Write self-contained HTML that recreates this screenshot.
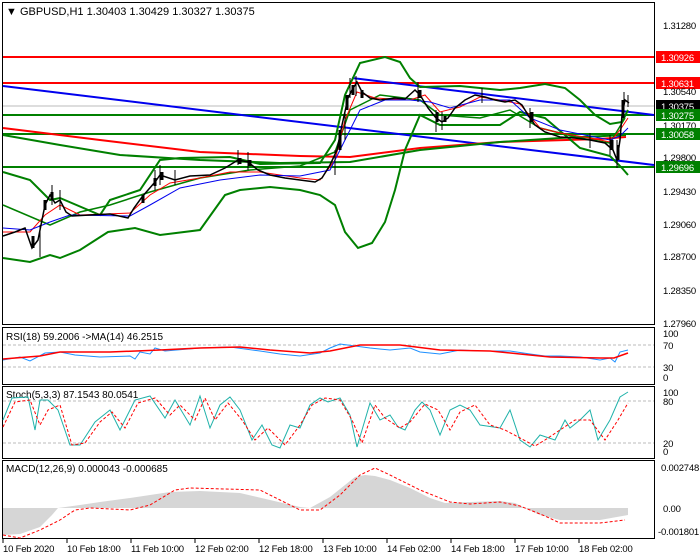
<!DOCTYPE html>
<html><head><meta charset="utf-8"><style>
html,body{margin:0;padding:0;background:#fff;width:700px;height:560px;overflow:hidden}
svg{display:block}
text{font-family:"Liberation Sans",sans-serif;font-size:10px;fill:#000}
.ax{font-size:9.5px;letter-spacing:-0.2px}
</style></head><body>
<svg width="700" height="560" viewBox="0 0 700 560">
<rect x="2.5" y="2.5" width="652" height="322" fill="none" stroke="#000"/>
<rect x="2.5" y="327.5" width="652" height="57" fill="none" stroke="#000"/>
<rect x="2.5" y="386.5" width="652" height="72" fill="none" stroke="#000"/>
<rect x="2.5" y="460.5" width="652" height="78" fill="none" stroke="#000"/>

<line x1="3" y1="106" x2="654" y2="106" stroke="#bbb"/>
<line x1="3" y1="57" x2="654" y2="57" stroke="#f00" stroke-width="2"/>
<line x1="3" y1="83" x2="654" y2="83" stroke="#f00" stroke-width="2"/>
<line x1="3" y1="115" x2="654" y2="115" stroke="#008000" stroke-width="2"/>
<line x1="3" y1="134" x2="654" y2="134" stroke="#008000" stroke-width="2"/>
<line x1="3" y1="167" x2="654" y2="167" stroke="#008000" stroke-width="2"/>
<line x1="3" y1="86" x2="654" y2="165" stroke="#0000ee" stroke-width="2"/>
<line x1="352" y1="78" x2="654" y2="115" stroke="#0000ee" stroke-width="2"/>
<polyline fill="none" stroke="#f00" stroke-width="2" points="3,128 100,140 200,152 300,156 350,157 420,148 500,142 600,139 626,137"/>
<polyline fill="none" stroke="#008000" stroke-width="2" points="3,135 60,145 120,155 200,160 280,163 350,162 420,150 500,142 560,138 626,135"/>
<polyline fill="none" stroke="#008000" stroke-width="2" points="3,258 30,262 50,255 60,258 80,250 108,232 135,228 160,235 200,230 225,195 240,190 270,187 300,190 320,195 335,205 345,232 358,248 372,243 385,222 395,190 405,150 420,115 440,125 500,125 520,112 545,118 580,148 610,156 622,168 628,175"/>
<polyline fill="none" stroke="#008000" stroke-width="2" points="3,172 30,180 50,200 60,198 100,215 110,200 140,190 160,160 180,158 230,157 260,164 320,163 335,140 345,95 360,63 385,57 400,62 410,78 420,87 460,86 480,88 500,90 520,88 545,84 565,88 580,100 595,115 610,124 622,122 628,110"/>
<polyline fill="none" stroke="#008000" stroke-width="1.5" points="3,205 50,225 80,212 110,205 150,192 200,178 250,170 300,166 335,152 350,110 380,95 420,100 440,115 480,118 510,110 540,128 580,138 610,143 625,118"/>
<polyline fill="none" stroke="#f00" stroke-width="1" points="3,232 30,232 45,215 60,205 80,215 130,213 150,195 170,183 200,178 230,172 260,172 300,178 320,180 335,160 345,120 357,92 375,98 410,100 425,95 440,112 460,107 480,97 500,100 520,104 540,128 560,133 590,138 610,142 620,130 628,118"/>
<polyline fill="none" stroke="#0000ee" stroke-width="1" points="3,228 30,230 50,222 70,215 130,216 150,205 180,188 220,180 260,175 300,176 330,170 345,140 360,110 385,100 410,100 430,102 450,108 480,100 510,100 530,118 560,130 590,136 610,140 620,136 628,128"/>
<polyline fill="none" stroke="#000" stroke-width="1.5" points="3,236 15,232 25,228 32,248 38,240 45,205 50,195 55,203 60,200 66,212 72,216 90,215 110,214 128,218 134,208 142,197 155,182 160,175 175,180 190,176 210,175 225,168 238,160 248,162 258,170 270,175 285,178 300,180 315,182 322,178 330,165 337,150 342,125 348,98 352,90 357,82 362,92 370,98 380,100 395,98 405,99 415,90 420,95 428,108 436,118 442,122 448,118 455,108 465,100 475,95 485,97 495,100 505,102 515,100 522,105 528,115 535,125 545,132 560,137 575,138 590,140 605,143 613,150 617,160 620,140 622,115 625,100 629,103"/>
<path stroke="#000" stroke-width="1" d="M40,225v32M52,185v20M60,190v20M155,170v20M160,165v20M175,170v15M238,150v15M248,152v18M335,150v25M345,110v30M350,78v20M356,76v20M418,82v20M436,110v22M442,112v18M482,88v15M530,108v20M590,133v15M610,135v20M617,140v28M624,92v20M628,95v12"/>
<path stroke="#000" stroke-width="3" d="M33,236v12M45,200v10M52,192v8M143,195v8M155,178v8M162,172v8M240,158v6M250,160v6M340,130v20M347,95v15M353,85v10M362,90v8M420,90v8M437,112v10M445,116v6M532,112v10M612,140v10M618,145v15M623,100v18"/>

<g class="ax">
<text class="ax" x="663" y="29">1.31280</text>
<rect x="656" y="51" width="44" height="12" fill="#f00"/><text class="ax" x="661" y="61" style="fill:#fff">1.30926</text>
<rect x="656" y="77" width="44" height="12" fill="#f00"/><text class="ax" x="661" y="87" style="fill:#fff">1.30631</text>
<text class="ax" x="663" y="95">1.30540</text>
<rect x="656" y="100" width="44" height="12" fill="#000"/><text class="ax" x="661" y="110" style="fill:#fff">1.30375</text>
<rect x="656" y="109" width="44" height="12" fill="#008000"/><text class="ax" x="661" y="119" style="fill:#fff">1.30275</text>
<text class="ax" x="663" y="129">1.30170</text>
<rect x="656" y="128" width="44" height="12" fill="#008000"/><text class="ax" x="661" y="138" style="fill:#fff">1.30058</text>
<text class="ax" x="663" y="161">1.29800</text>
<rect x="656" y="161" width="44" height="12" fill="#008000"/><text class="ax" x="661" y="171" style="fill:#fff">1.29696</text>
<text class="ax" x="663" y="195">1.29430</text>
<text class="ax" x="663" y="228">1.29060</text>
<text class="ax" x="663" y="260">1.28700</text>
<text class="ax" x="663" y="294">1.28350</text>
<text class="ax" x="663" y="327">1.27960</text>
</g>
<text x="6" y="15" style="font-size:11px">▼ GBPUSD,H1  1.30403 1.30429 1.30327 1.30375</text>

<line x1="3" y1="345" x2="654" y2="345" stroke="#bbb" stroke-dasharray="3,2"/>
<line x1="3" y1="367" x2="654" y2="367" stroke="#bbb" stroke-dasharray="3,2"/>
<text x="6" y="340">RSI(18) 59.2006  -&gt;MA(14) 46.2515</text>
<polyline fill="none" stroke="#1e90ff" points="3,360 20,357 30,361 45,353 60,352 75,355 100,357 130,356 135,359 140,352 150,354 155,348 165,351 200,348 230,347 260,351 280,354 300,356 320,353 330,348 340,344 355,346 370,348 390,350 410,348 420,352 440,354 460,350 480,351 510,351 530,354 545,356 560,356 580,357 600,360 610,358 615,362 620,352 628,350"/>
<polyline fill="none" stroke="#f00" stroke-width="1.5" points="3,359 40,356 60,352 110,352 160,350 200,348 240,347 270,350 310,353 330,351 360,345 400,345 440,350 490,351 520,354 550,357 600,358 614,358 628,353"/>
<text class="ax" x="663" y="337">100</text><text class="ax" x="663" y="349">70</text><text class="ax" x="663" y="371">30</text><text class="ax" x="663" y="381">0</text>

<line x1="3" y1="401" x2="654" y2="401" stroke="#bbb" stroke-dasharray="3,2"/>
<line x1="3" y1="443" x2="654" y2="443" stroke="#bbb" stroke-dasharray="3,2"/>
<text x="6" y="398">Stoch(5,3,3) 87.1543 80.0541</text>
<polyline fill="none" stroke="#20b2aa" points="3,420 12,398 28,397 35,430 40,400 48,400 58,410 70,445 80,445 95,422 110,410 120,430 135,400 150,396 165,418 175,400 190,425 200,396 210,428 220,405 230,397 240,410 252,440 262,425 272,445 280,448 290,425 300,428 310,405 320,398 328,402 340,398 350,415 357,447 370,403 380,420 390,415 398,427 405,430 415,410 422,402 430,410 440,435 450,410 460,405 470,410 480,425 500,428 510,410 520,440 530,447 540,435 555,440 565,420 570,428 580,420 590,410 598,440 610,420 620,397 628,392"/>
<polyline fill="none" stroke="#f00" stroke-dasharray="3,2" points="3,427 15,402 30,400 40,425 48,410 60,405 72,445 85,443 100,422 112,412 125,428 138,403 155,398 170,415 180,405 195,420 205,398 215,420 228,403 242,420 255,440 268,428 285,445 300,425 312,405 325,398 340,400 352,420 362,443 375,405 385,418 400,428 410,422 425,404 438,410 450,430 460,412 475,405 490,425 505,430 520,438 535,446 545,440 560,430 575,420 590,420 605,440 618,420 628,403"/>
<text class="ax" x="663" y="396">100</text><text class="ax" x="663" y="405">80</text><text class="ax" x="663" y="447">20</text><text class="ax" x="663" y="455">0</text>

<text x="6" y="472">MACD(12,26,9) 0.000043 -0.000685</text>
<polygon fill="#c8c8c8" opacity="0.75" points="3,508 3,535 20,534 40,527 52,515 58,508 80,505 100,502 130,498 150,495 170,492 200,491 240,493 270,500 300,507 310,508 330,497 345,485 355,477 365,475 375,476 390,480 410,488 430,498 445,503 470,502 500,501 515,503 525,508 540,515 560,520 600,520 628,515 628,508"/>
<polyline fill="none" stroke="#f00" stroke-dasharray="3,2" points="3,535 20,538 40,530 60,520 75,510 90,508 130,510 150,505 175,490 190,488 260,490 280,500 300,510 320,510 340,495 360,475 375,468 390,475 420,490 450,502 470,504 500,502 520,506 545,516 560,523 600,523 625,520"/>
<text class="ax" x="661" y="471">0.002748</text><text class="ax" x="663" y="512">0.00</text><text class="ax" x="658" y="535">-0.001801</text>

<g>
<text class="ax" x="3" y="552">10 Feb 2020</text><text class="ax" x="67" y="552">10 Feb 18:00</text><text class="ax" x="131" y="552">11 Feb 10:00</text><text class="ax" x="195" y="552">12 Feb 02:00</text><text class="ax" x="259" y="552">12 Feb 18:00</text><text class="ax" x="323" y="552">13 Feb 10:00</text><text class="ax" x="387" y="552">14 Feb 02:00</text><text class="ax" x="451" y="552">14 Feb 18:00</text><text class="ax" x="515" y="552">17 Feb 10:00</text><text class="ax" x="579" y="552">18 Feb 02:00</text>
</g>
<path stroke="#000" d="M3,539v4M67,539v4M131,539v4M195,539v4M259,539v4M323,539v4M387,539v4M451,539v4M515,539v4M579,539v4"/>
</svg>
</body></html>
